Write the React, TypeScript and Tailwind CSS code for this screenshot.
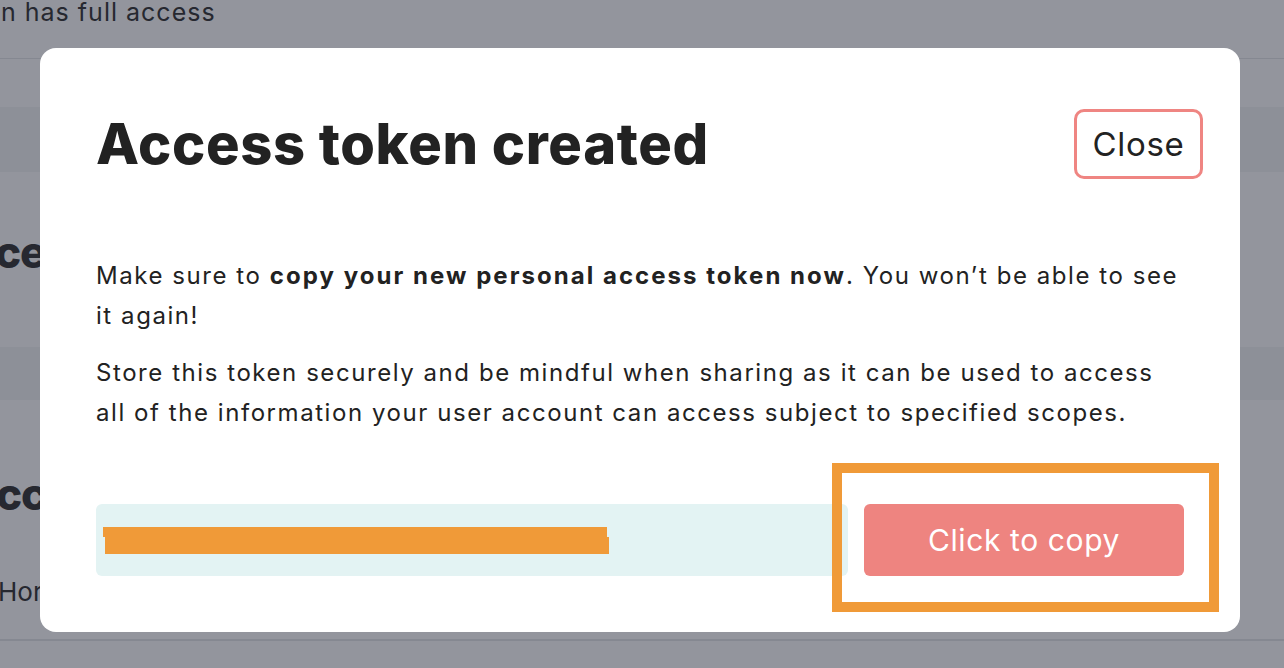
const font = { fontFamily: 'Inter, "Noto Sans", sans-serif' }

const BackgroundPage = () => {
  return (
    <div className="flex flex-col text-[#262830]">
      <div className="h-[59px] border-b border-[#858891]">
        <p className="-mt-[4px] pl-[1px] text-[25px] leading-8 tracking-[0.04em]">n has full access</p>
      </div>
      <div className="h-[48px]" />
      <div className="h-[65px] bg-[#8d9098]" />
      <div className="h-[175px] pt-[54px]">
        <h2 className="-ml-[5px] text-[44px] font-extrabold leading-[52px] tracking-tight">ce</h2>
      </div>
      <div className="h-[53px] bg-[#8d9098]" />
      <div className="h-[70px]" />
      <h2 className="-ml-[4px] h-[48px] text-[44px] font-extrabold leading-[48px] tracking-tight">cc</h2>
      <p className="mt-[56px] -ml-[2px] h-[36px] text-[26px] leading-[36px]">Hor</p>
      <div className="mt-[29px] border-b-2 border-[#858891]" />
    </div>
  )
}

const TokenModal = () => {
  return (
    <div className="absolute left-10 top-12 flex h-[584px] w-[1200px] flex-col rounded-2xl bg-white pl-14 pr-14 pt-[61px] text-[#222222]">
      {/* Header */}
      <div className="-mr-[19px] flex items-center justify-between">
        <h1 className="text-[56px] font-extrabold leading-none tracking-[0.012em]">
          Access token created
        </h1>
        <button className="flex h-[70px] w-[129px] items-center justify-center rounded-[10px] border-[3px] border-[#ef8582] text-[33px] leading-none tracking-[0.02em]">
          Close
        </button>
      </div>

      {/* Body */}
      <div className="mt-[77px] flex flex-col gap-[17px] text-[24px] leading-10 tracking-[0.065em]">
        <p>
          Make sure to <strong className="font-bold tracking-[0.085em]">copy your new personal access token now</strong>. You
          won’t be able to see it again!
        </p>
        <p>
          Store this token securely and be mindful when sharing as it can be used to access all of
          the information your user account can access subject to specified scopes.
        </p>
      </div>

      {/* Token row */}
      <div className="relative mt-[71px] flex gap-4">
        <div className="flex h-[72px] flex-1 items-center rounded-md bg-[#e3f3f3] px-[7px]">
          {/* redacted token */}
          <div className="flex flex-col">
            <div className="h-[10px] w-[504px] bg-[#f09a38]" />
            <div className="ml-[2px] h-[17px] w-[504px] bg-[#f09a38]" />
          </div>
        </div>
        <button className="flex h-[72px] w-[320px] items-center justify-center rounded-md bg-[#ee8480] text-[30px] tracking-[0.02em] text-white">
          Click to copy
        </button>
        {/* annotation highlight */}
        <div className="pointer-events-none absolute -top-[41px] left-[736px] h-[149px] w-[387px] border-[10px] border-[#f09a38]" />
      </div>
    </div>
  )
}

export default function App() {
  return (
    <div style={font} className="relative h-[668px] w-[1284px] overflow-hidden bg-[#93959d]">
      <BackgroundPage />
      <TokenModal />
    </div>
  )
}
